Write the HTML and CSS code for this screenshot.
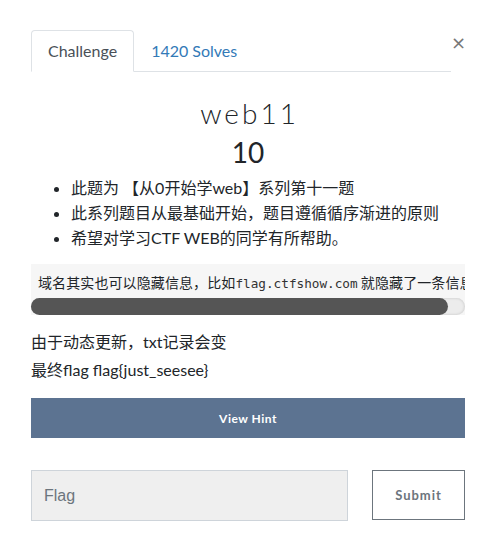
FILE: index.html
```html
<!DOCTYPE html>
<html>
<head>
<meta charset="utf-8">
<link rel="stylesheet" href="styles.css">
</head>
<body>
<div class="modal">
  <div class="header">
    <ul class="tabs">
      <li class="tab active">Challenge</li>
      <li class="tab link">1420 Solves</li>
    </ul>
    <span class="close">&times;</span>
  </div>
  <h2 class="title">web11</h2>
  <h3 class="value">10</h3>
  <ul class="desc">
    <li>此题为 【从0开始学web】系列第十一题</li>
    <li>此系列题目从最基础开始，题目遵循循序渐进的原则</li>
    <li>希望对学习CTF WEB的同学有所帮助。</li>
  </ul>
  <div class="code-box">
    <pre class="code">域名其实也可以隐藏信息，比如<code>flag.ctfshow.com</code> 就隐藏了一条信息</pre>
    <div class="scrollbar"><div class="thumb"></div></div>
  </div>
  <p class="para first">由于动态更新，txt记录会变</p>
  <p class="para">最终flag flag{just_seesee}</p>
  <button class="hint">View Hint</button>
  <div class="submit-row">
    <input class="flag-input" type="text" placeholder="Flag">
    <button class="submit">Submit</button>
  </div>
</div>
</body>
</html>
```

FILE: styles.css
```css
html, body {
  margin: 0;
  padding: 0;
  background: #fff;
}
body {
  font-family: Lato, "Noto Sans CJK SC", sans-serif;
  color: #212529;
}
.modal {
  width: 434px;
  margin-left: 31px;
  padding-top: 30px;
}
.header {
  display: flex;
  align-items: flex-start;
}
.tabs {
  flex: 1;
  list-style: none;
  margin: 0;
  padding: 0;
  display: flex;
  border-bottom: 1px solid #dee2e6;
}
.tab {
  padding: 0 16px;
  height: 40px;
  line-height: 40px;
  font-size: 16px;
  border: 1px solid transparent;
  border-radius: 4px 4px 0 0;
  margin-bottom: -1px;
}
.tab.active {
  color: #495057;
  border-color: #dee2e6 #dee2e6 #fff;
  background: #fff;
}
.tab.link {
  color: #337ab7;
}
.close {
  width: 14px;
  text-align: right;
  font-family: "DejaVu Sans", sans-serif;
  font-size: 18px;
  line-height: 18px;
  color: #777;
  margin-top: 4px;
  margin-right: 0;
}
.title {
  margin: 26px 0 0;
  text-align: center;
  font-family: Lato, sans-serif;
  font-weight: 300;
  font-size: 28px;
  letter-spacing: 3px;
  padding-left: 3px;
  line-height: 30px;
  color: #212529;
}
.value {
  margin: 6px 0 0;
  text-align: center;
  font-weight: 400;
  font-size: 28px;
  line-height: 36px;
  color: #212529;
}
.desc {
  margin: 5px 0 0;
  padding-left: 40px;
  font-size: 16px;
  line-height: 25px;
  color: #212529;
}
.code-box {
  margin-top: 14px;
  background: #f6f6f6;
}
.code {
  margin: 0;
  padding: 7px 0 0 7px;
  height: 27px;
  font-family: "Noto Sans CJK SC", sans-serif;
  font-size: 14px;
  letter-spacing: 0.1px;
  line-height: 22px;
  color: #212529;
  white-space: pre;
  overflow: hidden;
}
.code code {
  font-family: "DejaVu Sans Mono", monospace;
  font-size: 12.7px;
  letter-spacing: 0;
  color: #333;
}
.scrollbar {
  height: 17px;
  background: #ececec;
  border-radius: 9px;
  box-shadow: inset 0 0 3px rgba(0,0,0,0.18);
}
.thumb {
  width: 96%;
  height: 17px;
  background: #555;
  border-radius: 9px;
}
.para {
  margin: 0;
  font-size: 16px;
  line-height: 28px;
  color: #212529;
}
.para.first {
  margin-top: 13px;
}
.hint {
  display: block;
  width: 100%;
  height: 40px;
  margin-top: 14px;
  border: none;
  background: #5c7391;
  color: #fff;
  font-family: Lato, sans-serif;
  font-weight: 700;
  font-size: 12px;
  letter-spacing: 0.5px;
}
.submit-row {
  display: flex;
  gap: 24px;
  margin-top: 32px;
}
.flag-input {
  flex: 1;
  height: 51px;
  box-sizing: border-box;
  border: 1px solid #ced4da;
  background: #efefef;
  padding: 0 12px;
  font-family: "Liberation Sans", Arial, sans-serif;
  font-size: 16px;
  color: #495057;
  margin: 0;
}
.flag-input::placeholder {
  color: #6c757d;
}
.submit {
  width: 93px;
  height: 50px;
  box-sizing: border-box;
  border: 1px solid #6c757d;
  background: #fff;
  color: #6c757d;
  font-family: Lato, sans-serif;
  font-weight: 700;
  font-size: 13px;
  letter-spacing: 1px;
  margin: 0;
}
```
